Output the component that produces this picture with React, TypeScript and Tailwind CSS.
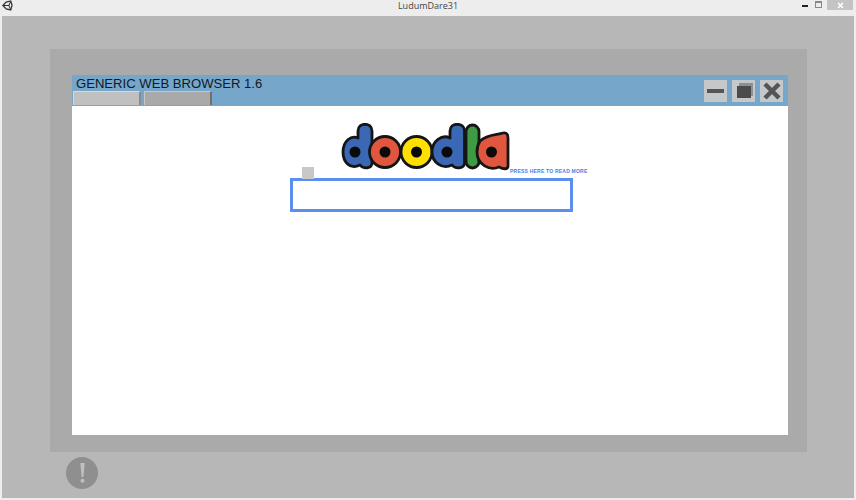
import React from "react";

const UnityIcon = () => (
  <svg width="11" height="11" viewBox="0 0 12 12" fill="none" stroke="#333" strokeWidth="1.4">
    <path d="M1 6 L4.5 2.2 L9.5 1 L11 5.8 L9.5 10.8 L4.5 9.8 Z" />
    <path d="M1 6 H7.5 M7.5 6 L9.5 1.5 M7.5 6 L9.5 10.5" strokeWidth="1.1" />
  </svg>
);

const Doodla = () => (
  <svg width="170" height="48" viewBox="340 123 170 48" aria-label="doodla">
    <g stroke="#151515" strokeWidth="2.8" strokeLinejoin="round">
      {/* d */}
      <path
        d="M358 138 V131 C358 122 372 122 372 131 V163 C372 169 363 169 360 165 C350 170 343 162 343 152 C343 141 351 135 358 138 Z"
        fill="#3a68b5"
      />
      {/* o */}
      <circle cx="385" cy="152" r="15.5" fill="#e0563f" />
      {/* o */}
      <circle cx="416.5" cy="152" r="15.5" fill="#ffe000" />
      {/* d */}
      <path
        d="M450 138 V131 C450 122 464.5 122 464.5 131 V163 C464.5 169 455 169 452 165 C442 170 432 162 432 152 C432 141 442 134 450 138 Z"
        fill="#3a68b5"
      />
      {/* l */}
      <rect x="466" y="125" width="13" height="43" rx="6.5" fill="#3f9a44" />
      {/* a */}
      <path
        d="M480 141 C487 134 497 135 503 133 C507 132 508 135 508 138 V166 C508 170 503 169 499 167 C490 171 477 165 477 152 C477 148 478 144 480 141 Z"
        fill="#e0563f"
      />
    </g>
    <circle cx="355" cy="152" r="5.5" fill="#0a0a0a" />
    <circle cx="385" cy="152" r="5.5" fill="#0a0a0a" />
    <circle cx="416.5" cy="152" r="5.5" fill="#0a0a0a" />
    <circle cx="447" cy="152" r="5.5" fill="#0a0a0a" />
    <circle cx="491.5" cy="152" r="5.5" fill="#0a0a0a" />
  </svg>
);

const WinButton = ({ children }: { children: React.ReactNode }) => (
  <div className="flex h-[22px] w-[23px] items-center justify-center bg-[#c4c8cb]">{children}</div>
);

export default function App() {
  return (
    <div className="flex h-[500px] w-[856px] flex-col overflow-hidden bg-[#ededed] font-['Liberation_Sans',sans-serif]">
      {/* Title bar */}
      <div className="relative flex h-4 shrink-0 justify-center">
        <div className="absolute left-[2px] top-0">
          <UnityIcon />
        </div>
        <span className="font-['Open_Sans',sans-serif] text-[9px] leading-[12px] text-[#444]">LudumDare31</span>
        <div className="absolute right-[3px] top-0 flex items-start">
          <div className="mr-[7px] mt-[5px] h-[2px] w-[6px] bg-[#222]" />
          <div className="mr-[5px] mt-[1px] h-[7px] w-[7px] border border-[#888] border-t-2" />
          <div className="flex h-[10px] w-[26px] items-center justify-center bg-[#c4c4c4]">
            <svg width="7" height="7" viewBox="0 0 7 7" stroke="#fff" strokeWidth="1.6">
              <path d="M1 1 L6 6 M6 1 L1 6" />
            </svg>
          </div>
        </div>
      </div>

      {/* Desktop area */}
      <div className="ml-[2px] mr-[2px] mb-[2px] flex flex-1 flex-col bg-[#b7b7b7] pl-[48px] pr-[47px] pt-[33px]">
        <div className="h-[403px] bg-[#aaaaaa] pl-[22px] pr-[19px] pt-[26px]">
          {/* Browser window */}
          <div className="flex h-[360px] flex-col bg-white">
            <div className="flex h-[31px] shrink-0 justify-between bg-[#76a7cb]">
              <div className="flex flex-col pl-[1px]">
                <div className="h-4 pl-[3px] pt-[1px] text-[13.1px] leading-[16px] text-[#0c1a26]">GENERIC WEB BROWSER 1.6</div>
                <div className="flex gap-[3px]">
                  <div className="h-[14px] w-[68px] border-l border-t border-r-2 border-l-[#d5d9dc] border-t-[#d5d9dc] border-r-[#8b8b8b] bg-[#c0c0c0]" />
                  <div className="h-[14px] w-[68px] border-l border-t border-r-2 border-l-[#c4c8cb] border-t-[#c4c8cb] border-r-[#6f6f6f] bg-[#a9a9a9]" />
                </div>
              </div>
              <div className="flex gap-[5px] pr-[5px] pt-[5px]">
                <WinButton>
                  <div className="h-1 w-[17px] bg-[#555]" />
                </WinButton>
                <WinButton>
                  <div className="relative mt-[2px]">
                    <div className="absolute -right-[2px] -top-[3px] h-[13px] w-[14px] bg-[#8f8f8f]" />
                    <div className="relative h-[12px] w-[14px] bg-[#4c4c4c]" />
                  </div>
                </WinButton>
                <WinButton>
                  <svg width="18" height="18" viewBox="0 0 18 18" stroke="#555" strokeWidth="4.5">
                    <path d="M2 2 L16 16 M16 2 L2 16" />
                  </svg>
                </WinButton>
              </div>
            </div>

            {/* Page */}
            <div className="relative flex-1 pl-[218px] pt-[72px]">
              <div className="absolute left-[268px] top-[17px]">
                <Doodla />
              </div>
              <div className="absolute left-[438px] top-[62px] whitespace-nowrap text-[5px] font-bold leading-[7px] tracking-[0.22px] text-[#3f80ec]">
                PRESS HERE TO READ MORE
              </div>
              <div className="absolute left-[230px] top-[61px] h-3 w-3 bg-[#c8c8c8]" />
              <div className="h-[34px] w-[283px] border-[3px] border-[#5a8fef] bg-white" />
            </div>
          </div>
        </div>

        {/* Alert */}
        <div className="pl-[16px] pt-[5px]">
          <div className="flex h-8 w-8 items-center justify-center rounded-full bg-[#8f8f8f]">
            <svg width="5" height="20" viewBox="0 0 5 20" fill="#c0c0c0">
              <path d="M0.3 0 H4.7 L3.4 14 H1.6 Z" />
              <circle cx="2.5" cy="17.8" r="2" />
            </svg>
          </div>
        </div>
      </div>
    </div>
  );
}
